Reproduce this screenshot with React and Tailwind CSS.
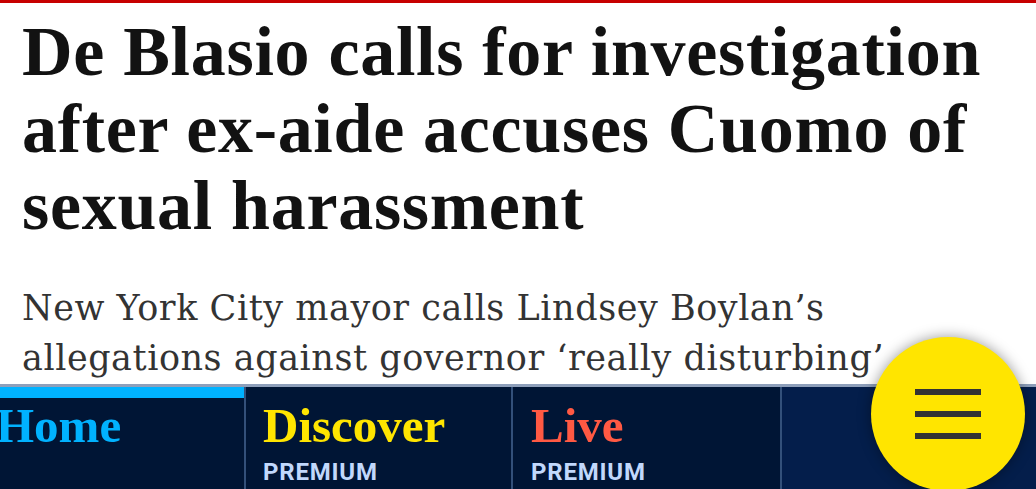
import React from "react";

export default function App() {
  return (
    <div className="relative h-[489px] w-[1036px] overflow-hidden bg-white">
      <div className="h-[3px] bg-[#c70000]" />
      <div className="px-[22px]">
        <h1 className="pt-[10px] font-['Liberation_Serif',serif] text-[70px] font-bold leading-[77px] tracking-[0.7px] text-[#121212] whitespace-nowrap">
          De Blasio calls for investigation
          <br />
          after ex-aide accuses Cuomo of
          <br />
          sexual harassment
        </h1>
        <p className="mt-[39px] font-['DejaVu_Serif',serif] text-[35px] leading-[50px] tracking-[0.55px] text-[#333333] whitespace-nowrap">
          New York City mayor calls Lindsey Boylan’s
          <br />
          allegations against governor ‘really disturbing’
        </p>
      </div>

      <nav className="absolute bottom-0 left-0 right-0 flex h-[105px] border-t-[3px] border-[#8e9fba] bg-[#001535]">
        <div className="flex w-[244px] flex-col">
          <div className="h-[11px] bg-[#00b2ff]" />
          <div className="-ml-[4px] mt-[3px] font-['Liberation_Serif',serif] text-[49px] font-bold leading-[49px] text-[#00b2ff]">
            Home
          </div>
        </div>
        <div className="w-[2px] bg-[#33507a]" />
        <div className="flex w-[265px] flex-col pl-[17px] pt-[14px]">
          <div className="font-['Liberation_Serif',serif] text-[49px] font-bold leading-[49px] text-[#ffe500]">
            Discover
          </div>
          <div className="mt-[10px] font-['Roboto',sans-serif] text-[24px] font-bold leading-[24px] tracking-[0.8px] text-[#c1d8fc]">
            PREMIUM
          </div>
        </div>
        <div className="w-[2px] bg-[#33507a]" />
        <div className="flex w-[267px] flex-col pl-[18px] pt-[14px]">
          <div className="font-['Liberation_Serif',serif] text-[49px] font-bold leading-[49px] text-[#ff5943]">
            Live
          </div>
          <div className="mt-[10px] font-['Roboto',sans-serif] text-[24px] font-bold leading-[24px] tracking-[0.8px] text-[#c1d8fc]">
            PREMIUM
          </div>
        </div>
        <div className="w-[2px] bg-[#33507a]" />
        <div className="flex-1 bg-[#041e4b]" />
      </nav>

      <button
        aria-label="Menu"
        className="absolute left-[871px] top-[337px] flex h-[154px] w-[154px] flex-col items-center justify-center gap-[16px] rounded-full bg-[#ffe500] shadow-[0_0_14px_rgba(0,0,0,0.4)]"
      >
        <span className="block h-[6px] w-[66px] bg-[#333333]" />
        <span className="block h-[6px] w-[66px] bg-[#333333]" />
        <span className="block h-[6px] w-[66px] bg-[#333333]" />
      </button>
    </div>
  );
}
